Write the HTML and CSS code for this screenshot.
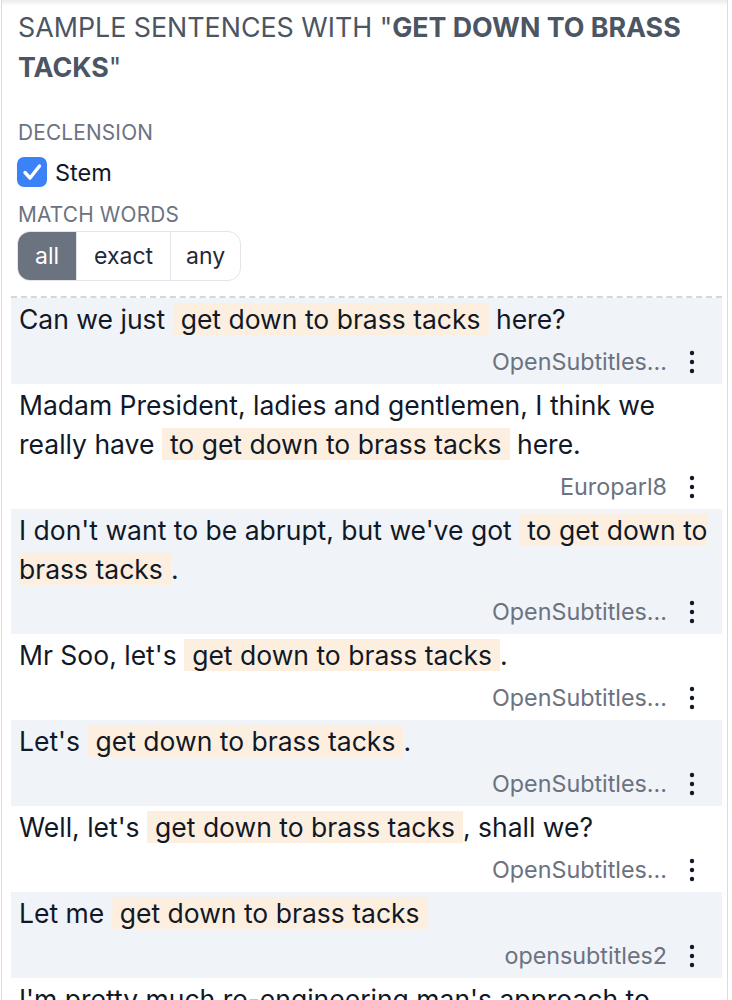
FILE: index.html
```html
<!DOCTYPE html>
<html lang="en">
<head>
<meta charset="utf-8">
<title>Sample sentences</title>
<link rel="stylesheet" href="styles.css">
</head>
<body>
<div class="card">
  <h2 class="title">SAMPLE SENTENCES WITH "<b>GET DOWN TO BRASS TACKS</b>"</h2>
  <div class="label">DECLENSION</div>
  <label class="check">
    <span class="box"><svg viewBox="0 0 30 30" width="30" height="30"><path d="M8 15.5l5 5.5 9.5-12" fill="none" stroke="#fff" stroke-width="3.4" stroke-linecap="round" stroke-linejoin="round"/></svg></span>
    <span>Stem</span>
  </label>
  <div class="label">MATCH WORDS</div>
  <div class="seg">
    <span class="seg-item active">all</span>
    <span class="seg-item">exact</span>
    <span class="seg-item">any</span>
  </div>
  <div class="results">
    <div class="row alt">
      <p class="text">Can we just <mark>get down to brass tacks</mark> here?</p>
      <div class="src"><span>OpenSubtitles...</span><svg class="kebab" viewBox="0 0 24 24" width="24" height="24"><circle cx="12" cy="3" r="2.2"/><circle cx="12" cy="12" r="2.2"/><circle cx="12" cy="21" r="2.2"/></svg></div>
    </div>
    <div class="row">
      <p class="text">Madam President, ladies and gentlemen, I think we really have <mark>to get down to brass tacks</mark> here.</p>
      <div class="src"><span>Europarl8</span><svg class="kebab" viewBox="0 0 24 24" width="24" height="24"><circle cx="12" cy="3" r="2.2"/><circle cx="12" cy="12" r="2.2"/><circle cx="12" cy="21" r="2.2"/></svg></div>
    </div>
    <div class="row alt">
      <p class="text">I don't want to be abrupt, but we've got <mark>to get down to brass tacks</mark>.</p>
      <div class="src"><span>OpenSubtitles...</span><svg class="kebab" viewBox="0 0 24 24" width="24" height="24"><circle cx="12" cy="3" r="2.2"/><circle cx="12" cy="12" r="2.2"/><circle cx="12" cy="21" r="2.2"/></svg></div>
    </div>
    <div class="row">
      <p class="text">Mr Soo, let's <mark>get down to brass tacks</mark>.</p>
      <div class="src"><span>OpenSubtitles...</span><svg class="kebab" viewBox="0 0 24 24" width="24" height="24"><circle cx="12" cy="3" r="2.2"/><circle cx="12" cy="12" r="2.2"/><circle cx="12" cy="21" r="2.2"/></svg></div>
    </div>
    <div class="row alt">
      <p class="text">Let's <mark>get down to brass tacks</mark>.</p>
      <div class="src"><span>OpenSubtitles...</span><svg class="kebab" viewBox="0 0 24 24" width="24" height="24"><circle cx="12" cy="3" r="2.2"/><circle cx="12" cy="12" r="2.2"/><circle cx="12" cy="21" r="2.2"/></svg></div>
    </div>
    <div class="row">
      <p class="text">Well, let's <mark>get down to brass tacks</mark>, shall we?</p>
      <div class="src"><span>OpenSubtitles...</span><svg class="kebab" viewBox="0 0 24 24" width="24" height="24"><circle cx="12" cy="3" r="2.2"/><circle cx="12" cy="12" r="2.2"/><circle cx="12" cy="21" r="2.2"/></svg></div>
    </div>
    <div class="row alt">
      <p class="text">Let me <mark>get down to brass tacks</mark></p>
      <div class="src"><span>opensubtitles2</span><svg class="kebab" viewBox="0 0 24 24" width="24" height="24"><circle cx="12" cy="3" r="2.2"/><circle cx="12" cy="12" r="2.2"/><circle cx="12" cy="21" r="2.2"/></svg></div>
    </div>
    <div class="row">
      <p class="text">I'm pretty much re-engineering man's approach to <mark>getting down to brass tacks</mark>.</p>
      <div class="src"><span>OpenSubtitles...</span><svg class="kebab" viewBox="0 0 24 24" width="24" height="24"><circle cx="12" cy="3" r="2.2"/><circle cx="12" cy="12" r="2.2"/><circle cx="12" cy="21" r="2.2"/></svg></div>
    </div>
  </div>
</div>
</body>
</html>
```
FILE: styles.css
```css
html, body {
  margin: 0;
  padding: 0;
  background: #fff;
}
body {
  font-family: Inter, "Helvetica Neue", Arial, sans-serif;
  color: #111827;
  overflow: hidden;
  height: 1000px;
}
.card {
  margin: 0 4px 0 1px;
  border-left: 1px solid #d9dce1;
  border-right: 1px solid #d9dce1;
  min-height: 1000px;
  background: linear-gradient(to bottom, rgba(0,0,0,0.08), rgba(0,0,0,0) 6px) no-repeat;
  display: flex;
  flex-direction: column;
  align-items: flex-start;
}
.title {
  margin: 7px 16px 0 16px;
  font-size: 26.8px;
  line-height: 40px;
  font-weight: 400;
  color: #4b5563;
}
.title b {
  font-weight: 700;
}
.label {
  margin: 33px 0 0 16px;
  font-size: 20.8px;
  line-height: 26px;
  color: #6b7280;
  letter-spacing: 0.2px;
}
.label + .seg {
  margin-top: 3px;
}
.check + .label {
  margin-top: 15px;
}
.check {
  margin: 11px 0 0 15px;
  display: flex;
  align-items: center;
  gap: 8px;
  font-size: 23.5px;
  color: #111827;
}
.box {
  width: 30px;
  height: 30px;
  border-radius: 7px;
  background: #3b82f6;
  display: flex;
}
.seg {
  margin-left: 15px;
  display: flex;
  border: 1px solid #e2e5ea;
  border-radius: 13px;
  overflow: hidden;
  height: 48px;
}
.seg-item {
  display: flex;
  align-items: center;
  justify-content: center;
  font-size: 23px;
  color: #1f2937;
  padding: 0 17px;
}
.seg-item:last-child {
  padding: 0 15px;
}
.seg-item + .seg-item {
  border-left: 1px solid #e2e5ea;
}
.seg-item.active {
  background: #6b7280;
  color: #fff;
}
.results {
  margin: 15px 0 0 9px;
  align-self: stretch;
  margin-right: 5px;
  border-top: 2px dashed #d4d8de;
}
.row {
  padding: 2px 0 0 8px;
}
.row.alt {
  background: #f0f3f7;
}
.text {
  margin: 0;
  font-size: 26.5px;
  line-height: 39px;
  color: #111827;
  padding-right: 4px;
}
mark {
  background: #fdefdf;
  color: inherit;
  padding: 0 8px;
}
.src {
  height: 45px;
  display: flex;
  align-items: center;
  justify-content: flex-end;
  padding-right: 18px;
  gap: 13px;
  font-size: 23.3px;
  color: #6b7280;
}
.kebab {
  fill: #111827;
}
```
